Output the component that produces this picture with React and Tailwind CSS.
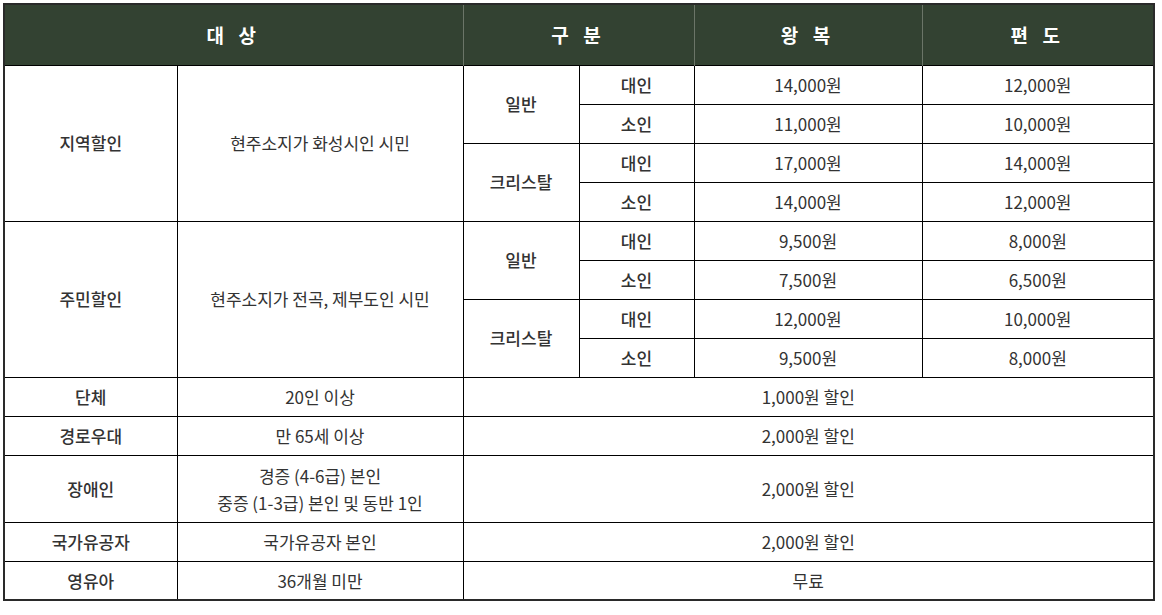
import React from "react";

const font = { fontFamily: '"Noto Sans CJK KR", "Noto Sans", sans-serif' };

const regions = [
  {
    name: "지역할인",
    desc: "현주소지가 화성시인 시민",
    groups: [
      { kind: "일반", rows: [["대인", "14,000원", "12,000원"], ["소인", "11,000원", "10,000원"]] },
      { kind: "크리스탈", rows: [["대인", "17,000원", "14,000원"], ["소인", "14,000원", "12,000원"]] },
    ],
  },
  {
    name: "주민할인",
    desc: "현주소지가 전곡, 제부도인 시민",
    groups: [
      { kind: "일반", rows: [["대인", "9,500원", "8,000원"], ["소인", "7,500원", "6,500원"]] },
      { kind: "크리스탈", rows: [["대인", "12,000원", "10,000원"], ["소인", "9,500원", "8,000원"]] },
    ],
  },
];

const discounts = [
  { name: "단체", desc: ["20인 이상"], value: "1,000원 할인" },
  { name: "경로우대", desc: ["만 65세 이상"], value: "2,000원 할인" },
  { name: "장애인", desc: ["경증 (4-6급) 본인", "중증 (1-3급) 본인 및 동반 1인"], value: "2,000원 할인", tall: true },
  { name: "국가유공자", desc: ["국가유공자 본인"], value: "2,000원 할인" },
  { name: "영유아", desc: ["36개월 미만"], value: "무료" },
];

const td = "border border-black text-center align-middle p-0";

export default function App() {
  return (
    <div className="bg-white w-[1162px] h-[615px] pt-[3px] pl-[3px]" style={font}>
      <table className="border-collapse table-fixed w-[1150px] text-[17px] text-[#333] border-2 border-[#2a2a2a]">
        <colgroup>
          <col className="w-[173px]" />
          <col className="w-[286px]" />
          <col className="w-[116px]" />
          <col className="w-[115px]" />
          <col className="w-[228px]" />
          <col className="w-[232px]" />
        </colgroup>
        <thead>
          <tr className="h-[61px] bg-[#334232] text-white text-[19px] font-bold">
            <th colSpan={2} className="border-r border-[#6b7568] tracking-[5px]">대 상</th>
            <th colSpan={2} className="border-r border-[#6b7568] tracking-[5px]">구 분</th>
            <th className="border-r border-[#6b7568] tracking-[5px]">왕 복</th>
            <th className="tracking-[5px]">편 도</th>
          </tr>
        </thead>
        <tbody>
          {regions.map((r) =>
            r.groups.map((g, gi) =>
              g.rows.map((row, ri) => (
                <tr key={r.name + gi + ri} className="h-[39px]">
                  {gi === 0 && ri === 0 && (
                    <>
                      <td rowSpan={4} className={`${td} font-medium`}>{r.name}</td>
                      <td rowSpan={4} className={td}>{r.desc}</td>
                    </>
                  )}
                  {ri === 0 && (
                    <td rowSpan={2} className={`${td} font-medium`}>{g.kind}</td>
                  )}
                  <td className={`${td} font-medium`}>{row[0]}</td>
                  <td className={td}>{row[1]}</td>
                  <td className={td}>{row[2]}</td>
                </tr>
              ))
            )
          )}
          {discounts.map((d) => (
            <tr key={d.name} className={d.tall ? "h-[67px]" : "h-[39px]"}>
              <td className={`${td} font-medium`}>{d.name}</td>
              <td className={`${td} leading-[27px]`}>
                {d.desc.map((line) => (
                  <div key={line}>{line}</div>
                ))}
              </td>
              <td colSpan={4} className={td}>{d.value}</td>
            </tr>
          ))}
        </tbody>
      </table>
    </div>
  );
}
